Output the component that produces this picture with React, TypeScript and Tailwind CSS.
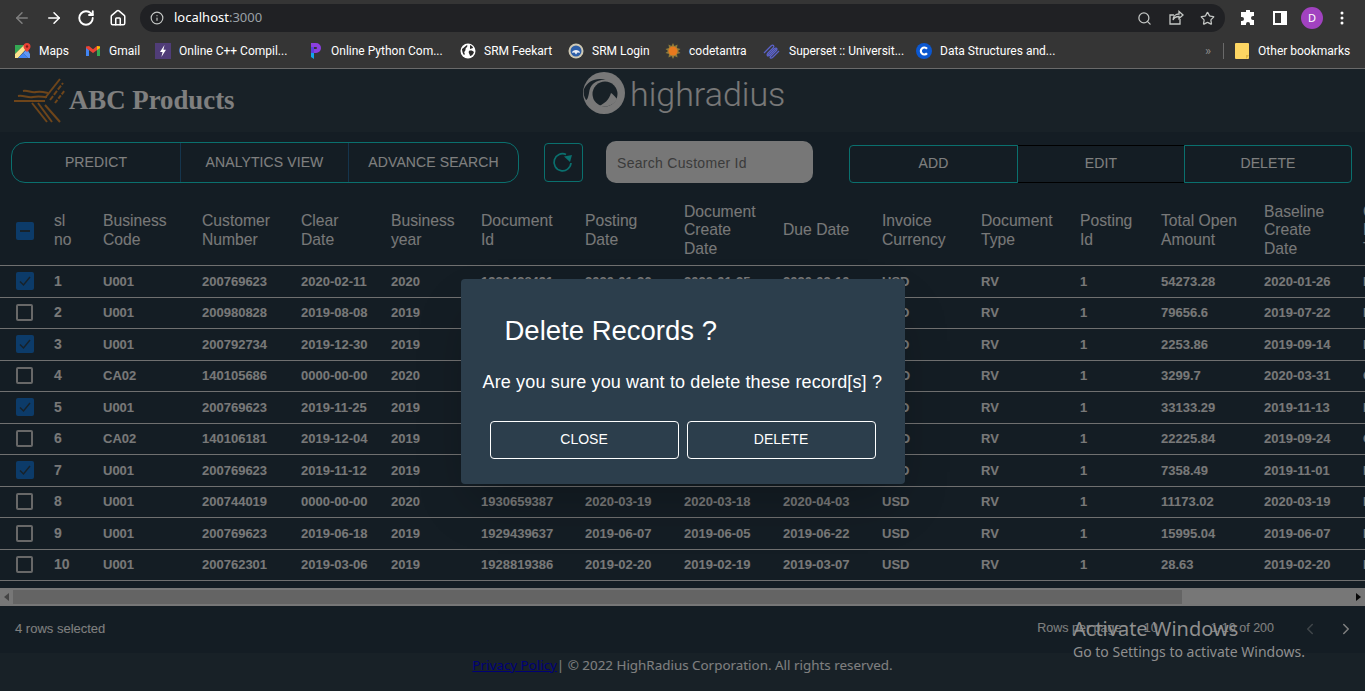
import { ArrowLeft, ArrowRight, ChevronLeft, ChevronRight, Home, Info, RotateCw, Search, Star } from 'lucide-react';

const columns = [
  'sl\nno',
  'Business\nCode',
  'Customer\nNumber',
  'Clear\nDate',
  'Business\nyear',
  'Document\nId',
  'Posting\nDate',
  'Document\nCreate\nDate',
  'Due Date',
  'Invoice\nCurrency',
  'Document\nType',
  'Posting\nId',
  'Total Open\nAmount',
  'Baseline\nCreate\nDate',
  'Customer\nPayment\nTerms',
];

const rows = [
  { id: 1, checked: true, cells: ['U001', '200769623', '2020-02-11', '2020', '1929438491', '2020-01-26', '2020-01-25', '2020-02-10', 'USD', 'RV', '1', '54273.28', '2020-01-26', 'NAH4'] },
  { id: 2, checked: false, cells: ['U001', '200980828', '2019-08-08', '2019', '1929724025', '2019-08-08', '2019-08-08', '2019-08-23', 'USD', 'RV', '1', '79656.6', '2019-07-22', 'NAD1'] },
  { id: 3, checked: true, cells: ['U001', '200792734', '2019-12-30', '2019', '1930234281', '2019-12-15', '2019-12-14', '2019-12-30', 'USD', 'RV', '1', '2253.86', '2019-09-14', 'NAM4'] },
  { id: 4, checked: false, cells: ['CA02', '140105686', '0000-00-00', '2020', '2960623488', '2020-03-30', '2020-03-30', '2020-04-10', 'CAD', 'RV', '1', '3299.7', '2020-03-31', 'CA10'] },
  { id: 5, checked: true, cells: ['U001', '200769623', '2019-11-25', '2019', '1930147974', '2019-11-13', '2019-11-13', '2019-11-28', 'USD', 'RV', '1', '33133.29', '2019-11-13', 'NAH4'] },
  { id: 6, checked: false, cells: ['CA02', '140106181', '2019-12-04', '2019', '2960581231', '2019-09-20', '2019-09-20', '2019-10-04', 'CAD', 'RV', '1', '22225.84', '2019-09-24', 'CA10'] },
  { id: 7, checked: true, cells: ['U001', '200769623', '2019-11-12', '2019', '1930083275', '2019-11-01', '2019-10-31', '2019-11-16', 'USD', 'RV', '1', '7358.49', '2019-11-01', 'NAH4'] },
  { id: 8, checked: false, cells: ['U001', '200744019', '0000-00-00', '2020', '1930659387', '2020-03-19', '2020-03-18', '2020-04-03', 'USD', 'RV', '1', '11173.02', '2020-03-19', 'NAA8'] },
  { id: 9, checked: false, cells: ['U001', '200769623', '2019-06-18', '2019', '1929439637', '2019-06-07', '2019-06-05', '2019-06-22', 'USD', 'RV', '1', '15995.04', '2019-06-07', 'NAH4'] },
  { id: 10, checked: false, cells: ['U001', '200762301', '2019-03-06', '2019', '1928819386', '2019-02-20', '2019-02-19', '2019-03-07', 'USD', 'RV', '1', '28.63', '2019-02-20', 'NAC6'] },
];

const gridCols =
  'grid grid-cols-[54px_49px_99px_99px_90px_90px_104px_99px_99px_99px_99px_99px_81px_103px_99px_99px] w-[1464px] items-center';

const MapsIcon = () => (
  <svg width="16" height="16" viewBox="0 0 16 16">
    <path d="M0 2h9L0 11z" fill="#34a853" />
    <path d="M0 11 9 2l3 3-9 10H0z" fill="#fbe38e" />
    <path d="M3 15l5-5 5 5z" fill="#4285f4" />
    <path d="M8 10l4-4 3 5v4h-2z" fill="#5e97f6" />
    <path d="M12 0a3.500 3.500 0 0 1 3.500 3.500C15.500 6 12 9 12 9S8.500 6 8.500 3.500A3.500 3.500 0 0 1 12 0z" fill="#ea4335" />
    <circle cx="12" cy="3.500" r="1.200" fill="#7d1f18" />
  </svg>
);

const GmailIcon = () => (
  <svg width="16" height="16" viewBox="0 0 16 16">
    <path d="M1 4v9h3V7z" fill="#4285f4" />
    <path d="M15 4v9h-3V7z" fill="#34a853" />
    <path d="M1 3.500 4 3l4 3.200L12 3l3 .5V5L8 10 1 5z" fill="#ea4335" />
    <path d="M12 3l3 .5V5l-3 2z" fill="#fbbc04" />
  </svg>
);

const CppIcon = () => (
  <svg width="16" height="16" viewBox="0 0 16 16">
    <rect width="16" height="16" fill="#503d78" />
    <path d="M9.500 2 5 9h2.600L6.400 14 11 6.800H8.400z" fill="#fff" />
  </svg>
);

const PythonIcon = () => (
  <svg width="14" height="18" viewBox="0 0 14 18">
    <path d="M2 1h5a5 5 0 0 1 0 10H5V7h2a1 1 0 0 0 0-2H2z" fill="#8b3fe0" />
    <path d="M2 5h3v6H2z" fill="#5b3fe0" />
    <path d="M2 11h3v6l-3-2z" fill="#12a7e8" />
  </svg>
);

const GlobeIcon = () => (
  <svg width="16" height="16" viewBox="0 0 16 16">
    <circle cx="8" cy="8" r="7.500" fill="#fff" />
    <path d="M2 6c2-1 3-3 5-4 1 1 0 2-1 3s0 2-1 3-1 2 0 3l-1 1C3 11 2 8 2 6zM9 8c2-1 4 0 5 1-1 3-3 4-4 4 0-2-2-3-1-5zM10 2c2 1 3 2 3 3l-3 1z" fill="#2b2b2b" />
  </svg>
);

const SrmIcon = () => (
  <svg width="16" height="16" viewBox="0 0 16 16">
    <circle cx="8" cy="8" r="7.500" fill="#cfc9b4" />
    <circle cx="8" cy="8" r="5.500" fill="#2e5fa8" />
    <path d="M4 9.500C4.500 6 11.500 6 12 9.500c-1 .5-2 0-2.500 0L8 11.500 6.500 9.500c-.5 0-1.500.5-2.500 0z" fill="#e9edf5" />
  </svg>
);

const SunIcon = () => (
  <svg width="16" height="16" viewBox="0 0 16 16">
    <path d="M8 0l1.500 3 3-1.500L12 5l3.500 1-2.500 2 2.500 2-3.500 1 .5 3.500-3-1.500L8 16l-1.500-3-3 1.500L4 11 .5 10 3 8 .5 6 4 5l-.5-3.500 3 1.500z" fill="#8f7c3a" />
    <circle cx="8" cy="8" r="4.500" fill="#e8791e" />
  </svg>
);

const SupersetIcon = () => (
  <svg width="18" height="16" viewBox="0 0 18 16" fill="none" stroke="#5b62c9" strokeWidth="1.300">
    <path d="M1 10 8 3c2-2 4 0 2 2L5 10c-2 2 0 4 2 2l7-7" />
    <path d="M4 13l7-7c2-2 4 0 2 2l-5 5c-2 2 0 3 2 1l6-6" />
  </svg>
);

const CircleCIcon = () => (
  <svg width="16" height="16" viewBox="0 0 16 16">
    <circle cx="8" cy="8" r="8" fill="#0b57d0" />
    <path d="M11 5.700A3.500 3.500 0 1 0 11 10.300" fill="none" stroke="#fff" strokeWidth="2.200" />
  </svg>
);

const FolderIcon = () => (
  <svg width="14" height="16" viewBox="0 0 14 16">
    <path d="M0 1a1 1 0 0 1 1-1h12a1 1 0 0 1 1 1v14a1 1 0 0 1-1 1H1a1 1 0 0 1-1-1z" fill="#fdd663" />
    <path d="M11 16v-4h3z" fill="#e0b840" />
  </svg>
);

const bookmarks = [
  { label: 'Maps', icon: <MapsIcon />, width: 'w-[70px]' },
  { label: 'Gmail', icon: <GmailIcon />, width: 'w-[70px]' },
  { label: 'Online C++ Compil...', icon: <CppIcon />, width: 'w-[154px]' },
  { label: 'Online Python Com...', icon: <PythonIcon />, width: 'w-[151px]' },
  { label: 'SRM Feekart', icon: <GlobeIcon />, width: 'w-[108px]' },
  { label: 'SRM Login', icon: <SrmIcon />, width: 'w-[97px]' },
  { label: 'codetantra', icon: <SunIcon />, width: 'w-[98px]' },
  { label: 'Superset :: Universit...', icon: <SupersetIcon />, width: 'w-[153px]' },
  { label: 'Data Structures and...', icon: <CircleCIcon />, width: 'w-[160px]' },
];

const BrowserChrome = () => (
  <div className="flex-shrink-0 border-b border-[#6a6a6a] bg-[#353535] font-['Noto_Sans',sans-serif] text-white">
    <div className="flex h-[36px] items-center">
      <div className="flex w-[140px] items-center gap-[14px] pl-[13px]">
        <ArrowLeft className="h-[18px] w-[18px] text-[#7f7f7f]" strokeWidth={2} />
        <ArrowRight className="h-[18px] w-[18px]" strokeWidth={2} />
        <RotateCw className="h-[18px] w-[18px]" strokeWidth={2.500} />
        <Home className="h-[18px] w-[18px]" strokeWidth={2} />
      </div>
      <div className="flex h-[28px] w-[1085px] items-center rounded-full bg-[#202124] pl-[10px] pr-[10px]">
        <Info className="h-[14px] w-[14px] text-[#c4c7c5]" />
        <span className="ml-[10px] text-[13px]">
          localhost<span className="text-[#9aa0a6]">:3000</span>
        </span>
        <div className="ml-auto flex items-center gap-[16px] text-[#c4c7c5]">
          <Search className="h-[15px] w-[15px]" />
          <svg width="16" height="16" viewBox="0 0 16 16" fill="none" stroke="currentColor" strokeWidth="1.300">
            <path d="M12 9v5H2V5h4" />
            <path d="M5 10c0-4 3-6 6-6V1.500L15 5l-4 3.500V6.500c-3 0-5 1-6 3.500z" />
          </svg>
          <Star className="h-[15px] w-[15px]" strokeWidth={2} />
        </div>
      </div>
      <div className="flex flex-1 items-center pl-[15px]">
        <svg width="16" height="16" viewBox="0 0 16 16" fill="#fff">
          <path d="M6 1a2 2 0 0 1 4 0v1h4v4h-1a2 2 0 0 0 0 4h1v5h-4v-1a2 2 0 0 0-4 0v1H1v-4h1a2 2 0 0 0 0-4H1V2h5z" />
        </svg>
        <svg className="ml-[17px]" width="14" height="14" viewBox="0 0 14 14">
          <path d="M0 0h14v14H0z" fill="#fff" />
          <path d="M2 2h6v10H2z" fill="#353535" />
        </svg>
        <span className="ml-[14px] flex h-[22px] w-[22px] items-center justify-center rounded-full bg-[#a142c0] text-[11px]">D</span>
        <svg className="ml-[17px]" width="4" height="14" viewBox="0 0 4 14" fill="#fff">
          <circle cx="2" cy="2" r="1.500" />
          <circle cx="2" cy="7" r="1.500" />
          <circle cx="2" cy="12" r="1.500" />
        </svg>
      </div>
    </div>
    <div className="flex h-[32px] items-center pb-[3px] pl-[15px] font-['Roboto',sans-serif] text-[12px]">
      {bookmarks.map((b) => (
        <div key={b.label} className={`flex items-center gap-[8px] ${b.width}`}>
          {b.icon}
          <span className="whitespace-nowrap">{b.label}</span>
        </div>
      ))}
      <span className="ml-[129px] text-[13px] text-[#8a8a8a]">»</span>
      <div className="ml-[12px] h-[16px] w-px bg-[#6a6a6a]" />
      <div className="ml-[11px] flex items-center gap-[9px]">
        <FolderIcon />
        <span className="whitespace-nowrap">Other bookmarks</span>
      </div>
    </div>
  </div>
);

const AbcLogo = () => (
  <svg width="54" height="46" viewBox="0 0 54 46" fill="none" stroke="#dc8a34" strokeWidth="2">
    <path d="M11 13c5-1 8 2 13 1s8 0 12 1" />
    <path d="M6 18c6-1 9 2 15 1s9 0 14 0" />
    <path d="M2 23h31" />
    <path d="M33 20 48 1" />
    <path d="M38 22 51 5" strokeDasharray="5 1.500" />
    <path d="M43 25 53 12" strokeDasharray="4 1.500" />
    <path d="M20 25 35 44M26 25 40 44M33 27 48 44" />
  </svg>
);

const HighRadiusMark = () => (
  <svg width="42" height="42" viewBox="0 0 42 42">
    <circle cx="21" cy="21" r="21" fill="#f0f0f0" />
    <path d="M1 17C5 8 14 5 24 8 14 7 7 12 6 21 5 26 4 28 3 28 1 25 0 21 1 17z" fill="#30434f" />
    <circle cx="22" cy="22" r="12.500" fill="#30434f" />
    <path d="M16 34c5-2 10-6 12-13 4 3 6 6 6 6-3 6-10 9-18 7z" fill="#f0f0f0" />
  </svg>
);

const RefreshIcon = () => (
  <svg width="24" height="24" viewBox="0 0 24 24" fill="none" stroke="#14e0dc" strokeWidth="1.700">
    <path d="M15 4.500A8.500 8.500 0 1 0 20 13" />
    <path d="M13 6.500 21 5l-2 7z" fill="#14e0dc" stroke="none" />
  </svg>
);

const Checkbox = ({ checked }: { checked: boolean }) =>
  checked ? (
    <span className="flex h-[18px] w-[18px] items-center justify-center rounded-[2px] bg-[#1976d2]">
      <svg width="14" height="14" viewBox="0 0 14 14" fill="none" stroke="#2f4554" strokeWidth="1.500">
        <path d="M2 7.500 5.500 11 12 3" />
      </svg>
    </span>
  ) : (
    <span className="h-[17px] w-[17px] rounded-[2px] border-2 border-[#d0d0d0]" />
  );

export default function App() {
  return (
    <div className="relative flex h-screen w-full flex-col overflow-hidden font-['Liberation_Sans',Arial,sans-serif]">
      <BrowserChrome />

      <div className="relative flex min-h-0 flex-1 flex-col bg-[#2c3f4d] text-white">
        <header className="relative flex h-[63px] flex-shrink-0 bg-[#30434f]">
          <div className="flex items-center pl-[12px]">
            <AbcLogo />
            <span className="ml-[3px] font-['Liberation_Serif',serif] text-[26.800px] font-bold">ABC Products</span>
          </div>
          <div className="absolute left-[583px] top-[3px] flex items-start gap-[5px]">
            <HighRadiusMark />
            <span className="mt-[1px] font-['Roboto',sans-serif] text-[34px] font-light leading-[42px] text-[#f0f0f0]">highradius</span>
          </div>
        </header>

        <div className="flex h-[64px] flex-shrink-0 items-start bg-[#283b49] pl-[11px] text-[14px] tracking-[0.1px]">
          <div className="mt-[10px] flex h-[41px] w-[508px] rounded-[14px] border border-[#14e0dc]">
            <button className="w-[169px] border-r border-[#2a6a9a] uppercase">Predict</button>
            <button className="w-[168px] border-r border-[#2a6a9a] uppercase">Analytics View</button>
            <button className="flex-1 uppercase">Advance Search</button>
          </div>
          <button className="ml-[25px] mt-[11px] flex h-[39px] w-[39px] items-center justify-center rounded-[4px] border border-[#14e0dc] pb-[2px] pr-[2px]">
            <RefreshIcon />
          </button>
          <div className="ml-[23px] mt-[9px] flex h-[42px] w-[207px] items-center rounded-[10px] bg-[#eeeeee] pl-[11px] pt-[2px] tracking-[0.3px] text-[#777777]">
            Search Customer Id
          </div>
          <div className="ml-[36px] mt-[13px] flex h-[38px] w-[503px]">
            <button className="w-[169px] rounded-l-[4px] border border-[#14e0dc] pb-[2px]">ADD</button>
            <button className="w-[166px] border-y border-black pb-[2px]">EDIT</button>
            <button className="w-[168px] rounded-r-[4px] border border-[#14e0dc] pb-[2px]">DELETE</button>
          </div>
        </div>

        <div className="flex-shrink-0 overflow-hidden bg-[#283b49] text-[#f0f0f0]">
          <div className={`${gridCols} h-[70px] border-b border-[#e0e0e0] text-[15.700px] leading-[18.400px]`}>
            <div className="pl-[16px]">
              <span className="flex h-[18px] w-[18px] items-center justify-center rounded-[2px] bg-[#1976d2]">
                <span className="h-[2px] w-[10px] bg-[#2f4554]" />
              </span>
            </div>
            {columns.map((c) => (
              <div key={c} className="whitespace-pre-line">{c}</div>
            ))}
          </div>
          {rows.map((row) => (
            <div key={row.id} className={`${gridCols} h-[31.500px] border-b border-[#e0e0e0] text-[13px] font-bold`}>
              <div className="flex pl-[16px]">
                <Checkbox checked={row.checked} />
              </div>
              <div className="text-[14px]">{row.id}</div>
              {row.cells.map((cell, i) => (
                <div key={i}>{cell}</div>
              ))}
            </div>
          ))}
        </div>

        <div className="flex h-[7px] flex-shrink-0 bg-[#283b49]" />
        <div className="flex h-[18px] flex-shrink-0 items-center justify-between bg-[#eeeeee] px-[4px] py-[2px]">
          <span className="h-0 w-0 border-y-[4px] border-r-[5px] border-y-transparent border-r-[#888888]" />
          <div className="ml-[4px] h-full w-[1169px] bg-[#c8c8c8]" />
          <div className="flex-1" />
          <span className="h-0 w-0 border-y-[4px] border-l-[5px] border-y-transparent border-l-[#111111]" />
        </div>

        <div className="flex h-[47px] flex-shrink-0 items-center bg-[#283b49] pb-[2px] pl-[15px] text-[13px]">
          <span>4 rows selected</span>
          <div className="ml-auto flex items-center pr-[10px] text-[12.500px]">
            <span>Rows per page:</span>
            <span className="ml-[19px]">10</span>
            <span className="ml-[53px]">1-10 of 200</span>
            <ChevronLeft className="ml-[27px] h-[18px] w-[18px] opacity-40" />
            <ChevronRight className="ml-[18px] h-[18px] w-[18px]" />
          </div>
        </div>

        <footer className="flex flex-1 items-center justify-center bg-[#30434f] pb-[14px] font-['Noto_Sans',sans-serif] text-[13.400px]">
          <a href="#" className="text-[#0000ee] underline">Privacy Policy</a>
          <span className="whitespace-pre">| © 2022 HighRadius Corporation. All rights reserved.</span>
        </footer>

        <div className="absolute inset-0 flex items-center justify-center bg-black/50 pt-[2px]">
          <div className="flex h-[205px] w-[444px] flex-col rounded-[4px] bg-[#2c3e4c] text-white shadow-2xl">
            <h2 className="pl-[44px] pt-[34px] text-[27.500px] leading-[36px]">Delete Records ?</h2>
            <p className="pl-[22px] pt-[21px] text-[18px] leading-[24px] tracking-[0.15px]">
              Are you sure you want to delete these record[s] ?
            </p>
            <div className="flex gap-[8px] pl-[29px] pt-[27px] text-[14px]">
              <button className="h-[38px] w-[189px] rounded-[4px] border border-white">CLOSE</button>
              <button className="h-[38px] w-[189px] rounded-[4px] border border-white">DELETE</button>
            </div>
          </div>
        </div>
      </div>

      <div className="pointer-events-none absolute left-[1073px] top-[615px] font-['Noto_Sans',sans-serif] text-[#8f8f8f]">
        <div className="text-[20px] leading-[27px]">Activate Windows</div>
        <div className="text-[14px] leading-[20px]">Go to Settings to activate Windows.</div>
      </div>
    </div>
  );
}
